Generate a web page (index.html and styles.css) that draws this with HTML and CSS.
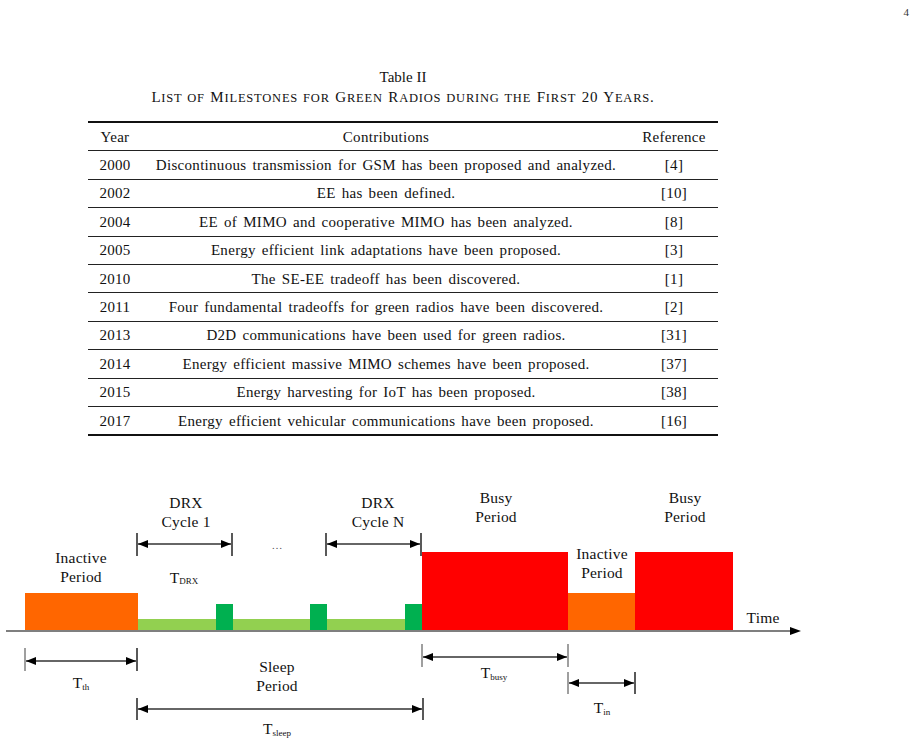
FILE: index.html
```html
<!DOCTYPE html>
<html>
<head>
<meta charset="utf-8">
<link rel="stylesheet" href="styles.css">
</head>
<body>
<div class="page-num">4</div>
<div class="table-block">
  <div class="caption">
    <div>Table II</div>
    <div class="caption-sc">L<span class="sm">ist of</span> M<span class="sm">ilestones for</span> G<span class="sm">reen</span> R<span class="sm">adios during the</span> F<span class="sm">irst</span> 20 Y<span class="sm">ears</span>.</div>
  </div>
  <table class="milestones">
    <colgroup><col class="c-year"><col class="c-contrib"><col class="c-ref"></colgroup>
    <thead>
      <tr><th>Year</th><th>Contributions</th><th>Reference</th></tr>
    </thead>
    <tbody>
      <tr><td>2000</td><td>Discontinuous transmission for GSM has been proposed and analyzed.</td><td>[4]</td></tr>
      <tr><td>2002</td><td>EE has been defined.</td><td>[10]</td></tr>
      <tr><td>2004</td><td>EE of MIMO and cooperative MIMO has been analyzed.</td><td>[8]</td></tr>
      <tr><td>2005</td><td>Energy efficient link adaptations have been proposed.</td><td>[3]</td></tr>
      <tr><td>2010</td><td>The SE-EE tradeoff has been discovered.</td><td>[1]</td></tr>
      <tr><td>2011</td><td>Four fundamental tradeoffs for green radios have been discovered.</td><td>[2]</td></tr>
      <tr><td>2013</td><td>D2D communications have been used for green radios.</td><td>[31]</td></tr>
      <tr><td>2014</td><td>Energy efficient massive MIMO schemes have been proposed.</td><td>[37]</td></tr>
      <tr><td>2015</td><td>Energy harvesting for IoT has been proposed.</td><td>[38]</td></tr>
      <tr><td>2017</td><td>Energy efficient vehicular communications have been proposed.</td><td>[16]</td></tr>
    </tbody>
  </table>
</div>

<svg class="diagram" width="923" height="285" viewBox="0 460 923 285" xmlns="http://www.w3.org/2000/svg">
  <defs>
    <marker id="ah" viewBox="0 0 10 8" refX="10" refY="4" markerWidth="10" markerHeight="8" markerUnits="userSpaceOnUse" orient="auto-start-reverse">
      <path d="M0,0 L10,4 L0,8 Z" fill="#000"/>
    </marker>
  </defs>

  <!-- bars -->
  <rect x="25" y="592" width="113" height="38" fill="#FF6600"/>
  <rect x="138" y="618" width="78" height="12" fill="#92D050"/>
  <rect x="216" y="603" width="17" height="27" fill="#00B050"/>
  <rect x="233" y="618" width="77" height="12" fill="#92D050"/>
  <rect x="310" y="603" width="17" height="27" fill="#00B050"/>
  <rect x="327" y="618" width="78" height="12" fill="#92D050"/>
  <rect x="405" y="603" width="17" height="27" fill="#00B050"/>
  <rect x="422" y="551" width="146" height="79" fill="#FF0000"/>
  <rect x="568" y="592" width="67" height="38" fill="#FF6600"/>
  <rect x="635" y="551" width="98" height="79" fill="#FF0000"/>

  <!-- axis -->
  <line x1="6" y1="630" x2="791" y2="630" stroke="#7f7f7f" stroke-width="2"/>
  <path d="M790,626 L801,630 L790,634 Z" fill="#000"/>

  <!-- dimension arrows -->
  <g class="dim">
    <line x1="137" y1="532" x2="137" y2="555" stroke="#222"/>
    <line x1="232" y1="532" x2="232" y2="555" stroke="#222"/>
    <line x1="138" y1="543" x2="231" y2="543" marker-start="url(#ah)" marker-end="url(#ah)"/>
    <line x1="326" y1="532" x2="326" y2="555" stroke="#222"/>
    <line x1="421" y1="532" x2="421" y2="555" stroke="#222"/>
    <line x1="327" y1="543" x2="420" y2="543" marker-start="url(#ah)" marker-end="url(#ah)"/>

    <line x1="25" y1="647" x2="25" y2="670" stroke="#7f7f7f"/>
    <line x1="137" y1="647" x2="137" y2="670" stroke="#222"/>
    <line x1="26" y1="660" x2="136" y2="660" marker-start="url(#ah)" marker-end="url(#ah)"/>

    <line x1="137" y1="697" x2="137" y2="719" stroke="#222"/>
    <line x1="423" y1="697" x2="423" y2="719" stroke="#222"/>
    <line x1="138" y1="708" x2="422" y2="708" marker-start="url(#ah)" marker-end="url(#ah)"/>

    <line x1="422" y1="643" x2="422" y2="666" stroke="#7f7f7f"/>
    <line x1="568" y1="643" x2="568" y2="666" stroke="#7f7f7f"/>
    <line x1="423" y1="656" x2="567" y2="656" marker-start="url(#ah)" marker-end="url(#ah)"/>

    <line x1="568" y1="671" x2="568" y2="693" stroke="#7f7f7f"/>
    <line x1="635" y1="671" x2="635" y2="693" stroke="#222"/>
    <line x1="569" y1="682" x2="634" y2="682" marker-start="url(#ah)" marker-end="url(#ah)"/>
  </g>

  <!-- labels -->
  <g class="lbl">
    <text x="186" y="507">DRX</text>
    <text x="186" y="526">Cycle 1</text>
    <text x="378" y="507">DRX</text>
    <text x="378" y="526">Cycle N</text>
    <text x="277" y="548" class="dots">…</text>
    <text x="81" y="562">Inactive</text>
    <text x="81" y="581">Period</text>
    <text x="184" y="582">T<tspan class="sub" dy="1">DRX</tspan></text>
    <text x="496" y="502">Busy</text>
    <text x="496" y="521">Period</text>
    <text x="685" y="502">Busy</text>
    <text x="685" y="521">Period</text>
    <text x="602" y="558">Inactive</text>
    <text x="602" y="577">Period</text>
    <text x="763" y="622">Time</text>
    <text x="81" y="687">T<tspan class="sub" dy="2">th</tspan></text>
    <text x="277" y="671">Sleep</text>
    <text x="277" y="690">Period</text>
    <text x="277" y="733">T<tspan class="sub" dy="2">sleep</tspan></text>
    <text x="494" y="677">T<tspan class="sub" dy="2">busy</tspan></text>
    <text x="602" y="712">T<tspan class="sub" dy="2">in</tspan></text>
  </g>
</svg>
</body>
</html>
```

FILE: styles.css
```css
html, body {
  margin: 0;
  padding: 0;
  background: #fff;
}
body {
  font-family: "Liberation Serif", "Times New Roman", serif;
  color: #111;
  width: 923px;
}
.page-num {
  height: 24px;
  line-height: 24px;
  font-size: 11px;
  text-align: right;
  padding-right: 14px;
  color: #333;
}
.table-block {
  margin-left: 88px;
  width: 630px;
}
.caption {
  margin-top: 43px;
  text-align: center;
  font-size: 15px;
  line-height: 20px;
}
.caption-sc {
  letter-spacing: 0.8px;
  word-spacing: 1px;
  white-space: nowrap;
}
.caption-sc .sm {
  font-size: 12.5px;
  text-transform: uppercase;
}
.milestones {
  margin-top: 13px;
  width: 630px;
  border-collapse: collapse;
  font-size: 15px;
  table-layout: fixed;
}
.c-year { width: 54px; }
.c-contrib { width: 488px; }
.c-ref { width: 88px; }
.milestones th,
.milestones td {
  font-weight: normal;
  text-align: center;
  padding: 0;
  height: 27.4px;
  line-height: 20px;
  border-bottom: 1px solid #222;
  white-space: nowrap;
  letter-spacing: 0.3px;
  word-spacing: 2px;
}
.milestones thead tr {
  border-top: 2px solid #111;
}
.milestones tbody tr:last-child td {
  border-bottom: 2px solid #111;
}
.diagram {
  display: block;
  margin-top: 25px;
}
.diagram .dim line {
  stroke-width: 1.5;
}
.diagram .dim line[marker-start] {
  stroke: #333;
  stroke-width: 1.3;
}
.diagram .lbl text {
  font-family: "Liberation Serif", "Times New Roman", serif;
  font-size: 15.5px;
  letter-spacing: 0.2px;
  fill: #111;
  text-anchor: middle;
}
.diagram .lbl .sub {
  font-size: 9px;
  letter-spacing: 0;
}
.diagram .lbl .dots {
  font-size: 11px;
  fill: #555;
}
```
